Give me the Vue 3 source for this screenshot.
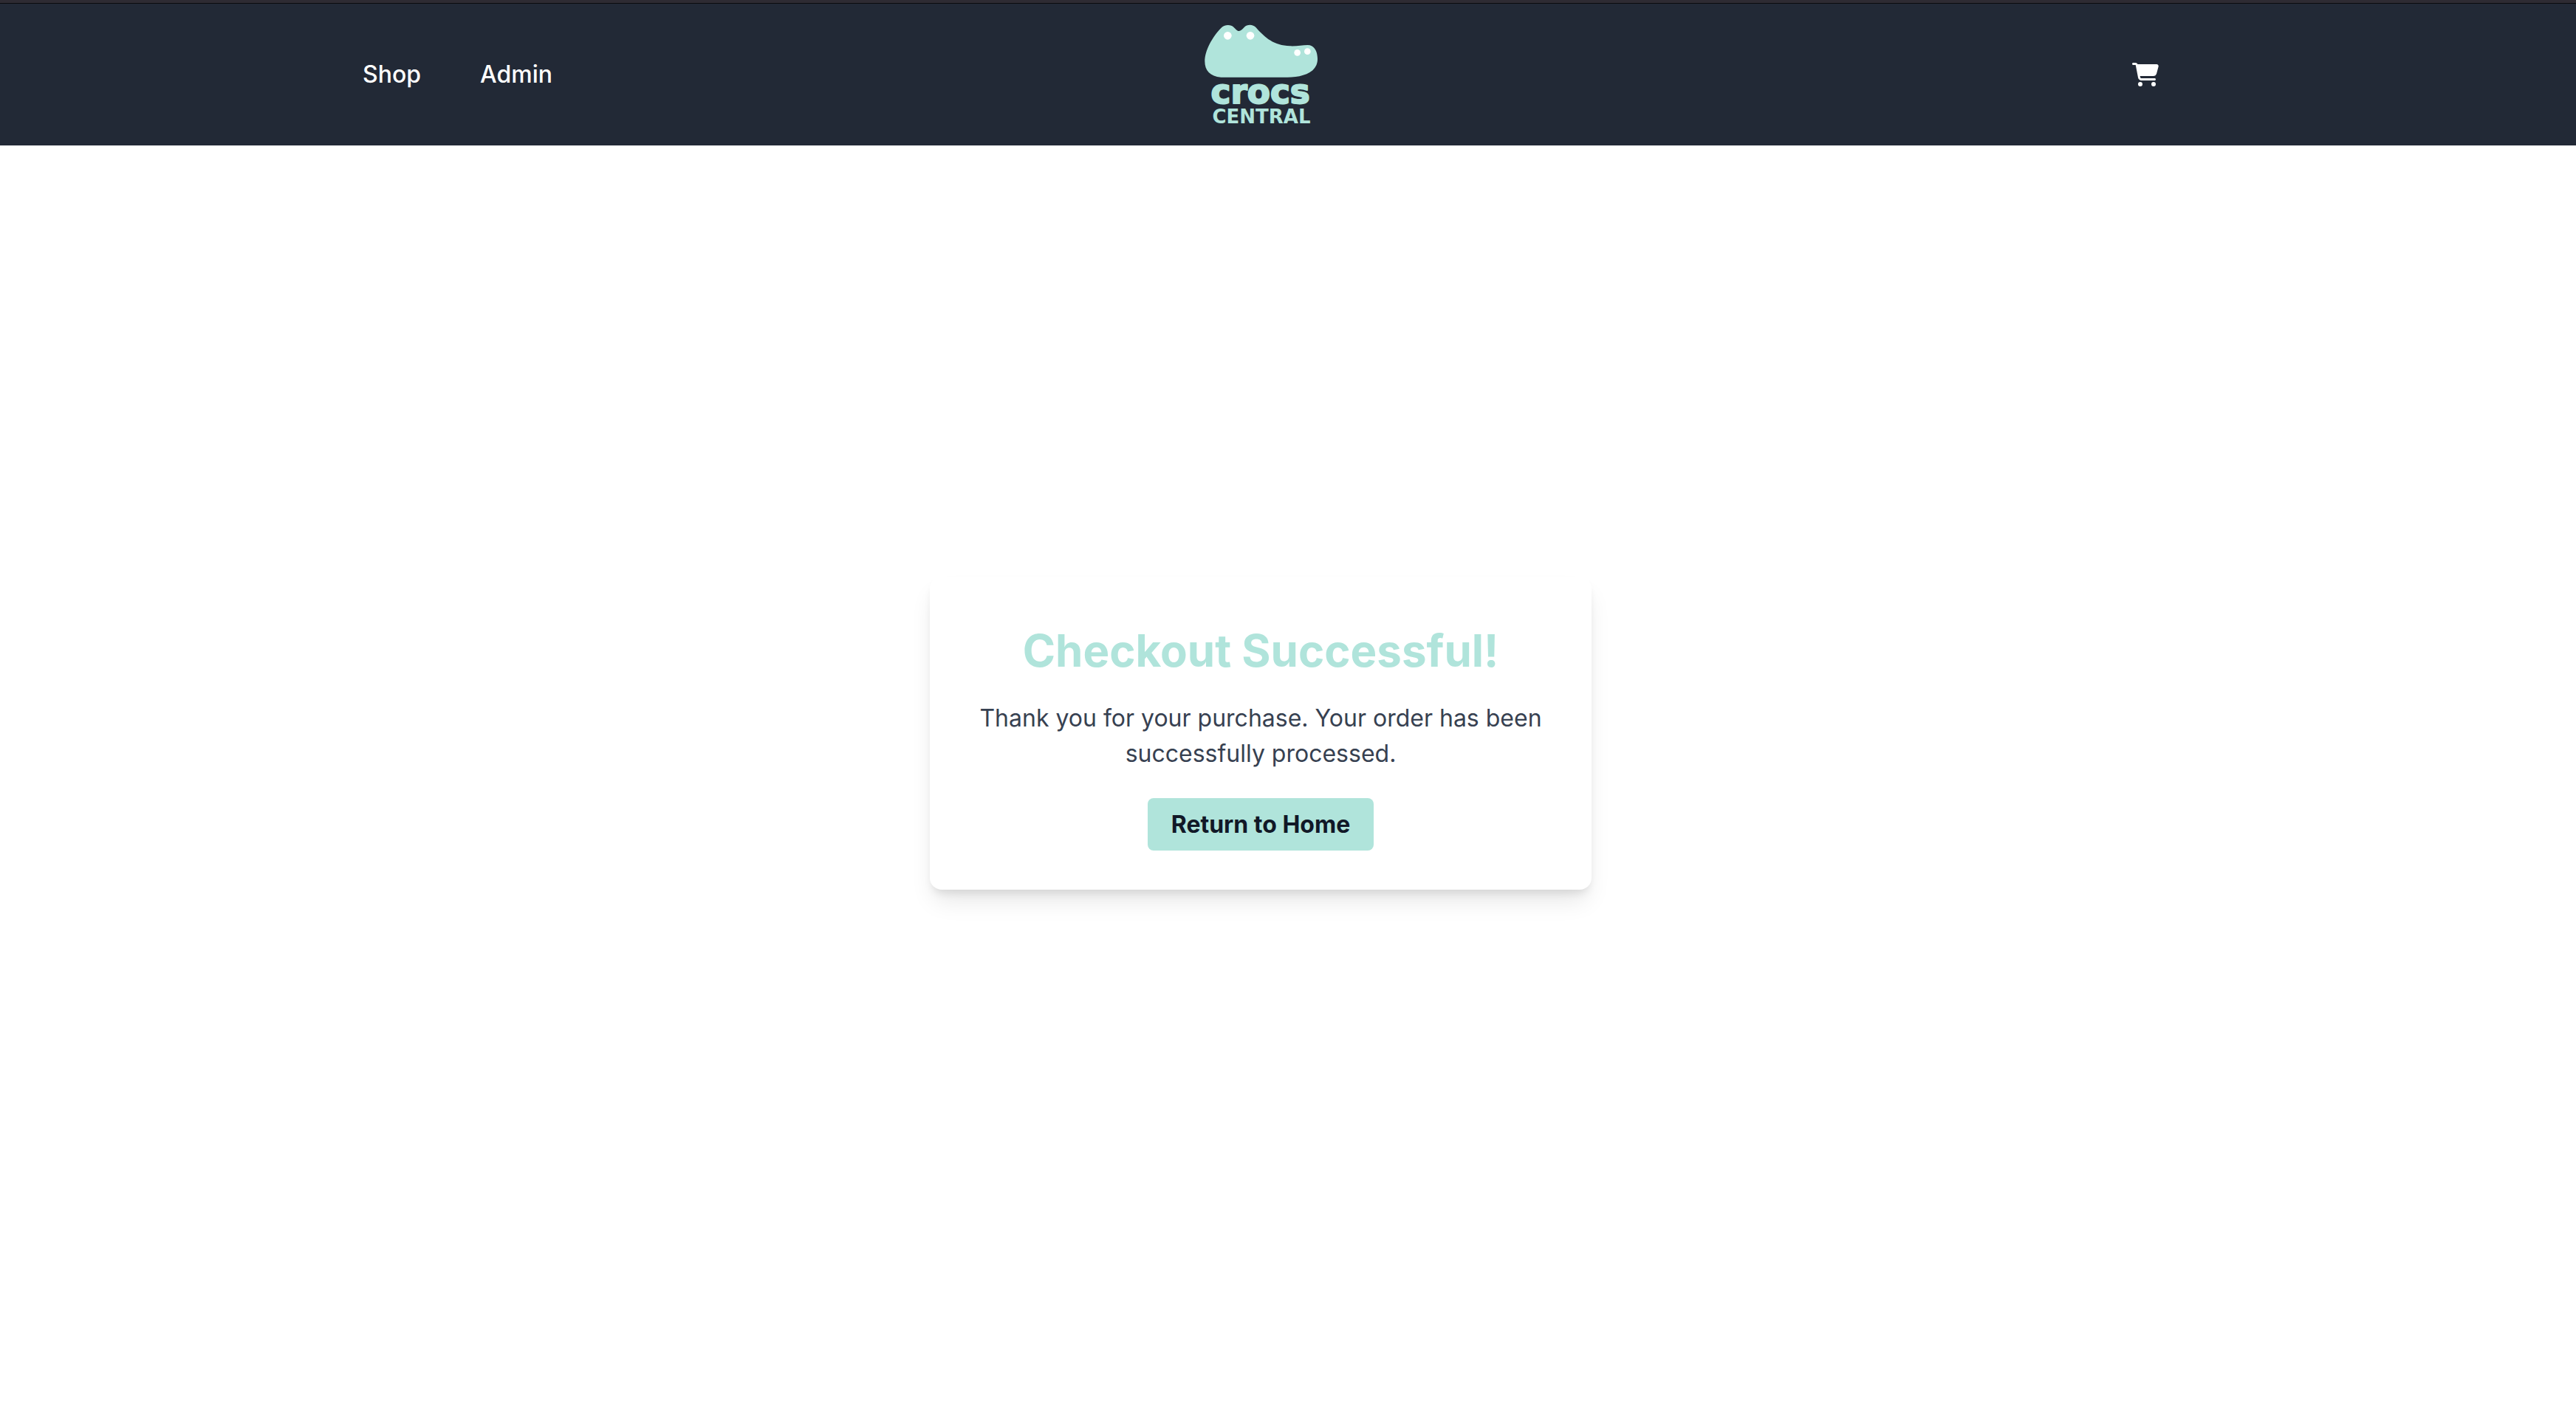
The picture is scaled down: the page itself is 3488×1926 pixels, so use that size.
<script setup>
const links = [
  { label: 'Shop', href: '#shop' },
  { label: 'Admin', href: '#admin' },
]
</script>

<template>
  <div class="page">
    <header class="navbar">
      <div class="navbar-inner">
        <nav class="links" aria-label="Main">
          <a v-for="link in links" :key="link.label" :href="link.href">{{ link.label }}</a>
        </nav>
        <a class="logo" href="#home" aria-label="Crocs Central">
          <svg viewBox="81 63 480 480" width="160" height="160" aria-hidden="true">
            <path
              class="mint"
              d="M94 250C94 205 125 150 160 114C172 99 200 98 211 110C222 120 226 126 233 126C240 126 246 119 254 111C266 98 290 98 302 112C340 155 375 185 440 187C470 188 490 183 512 183C540 183 552 212 552 240C552 295 490 314 430 314H160C115 312 94 285 94 250Z"
            />
            <g fill="#fff">
              <circle cx="187" cy="145" r="16" />
              <circle cx="279" cy="145" r="16" />
              <circle cx="470" cy="214" r="13" />
              <circle cx="511" cy="209" r="13" />
            </g>
            <text class="mint crocs" x="320" y="419">crocs</text>
            <text class="mint central" x="324" y="500">CENTRAL</text>
          </svg>
        </a>
        <a class="cart" href="#cart" aria-label="Cart">
          <svg viewBox="0 0 576 512" width="36" height="32" aria-hidden="true">
            <path
              fill="#fff"
              d="M0 24C0 10.7 10.7 0 24 0H69.5c22 0 41.5 12.8 50.6 32h411c26.3 0 45.5 25 38.6 50.4l-41 152.3c-8.5 31.4-37 53.3-69.5 53.3H170.7l5.4 28.5c2.2 11.3 12.1 19.5 23.6 19.5H488c13.3 0 24 10.7 24 24s-10.7 24-24 24H199.7c-34.6 0-64.3-24.6-70.7-58.5L77.4 54.5c-.7-3.8-4-6.5-7.9-6.5H24C10.7 48 0 37.3 0 24zM128 464a48 48 0 1 1 96 0 48 48 0 1 1-96 0zm336-48a48 48 0 1 1 0 96 48 48 0 1 1 0-96z"
            />
          </svg>
        </a>
      </div>
    </header>
    <main>
      <section class="card">
        <h1>Checkout Successful!</h1>
        <p>Thank you for your purchase. Your order has been successfully processed.</p>
        <a class="button" href="#home">Return to Home</a>
      </section>
    </main>
  </div>
</template>

<style>
body {
  margin: 0;
  background: #fff;
}
</style>

<style scoped>
.page {
  box-sizing: border-box;
  display: flex;
  flex-direction: column;
  min-height: 100vh;
  border-top: 4px solid #2e2b33;
  font-family: Inter, sans-serif;
  font-size: 32px;
  line-height: 48px;
}

.navbar {
  padding-right: 74px;
  border-top: 1px solid #0b0b0d;
  background: #222936;
}

.navbar-inner {
  box-sizing: border-box;
  display: grid;
  grid-template-columns: 1fr auto 1fr;
  align-items: center;
  max-width: 2560px;
  min-height: 192px;
  margin: 0 auto;
  padding: 0 64px;
}

.links {
  display: flex;
  gap: 80px;
}

.links a {
  color: #fff;
  font-weight: 500;
  text-decoration: none;
}

.logo,
.cart {
  display: flex;
}

.cart {
  justify-self: end;
}

.mint {
  fill: #b0e4db;
}

.crocs,
.central {
  font-family: "DejaVu Sans", sans-serif;
  font-weight: 700;
  text-anchor: middle;
}

.crocs {
  font-size: 136px;
  stroke: #b0e4db;
  stroke-width: 6px;
  stroke-linejoin: round;
}

.central {
  font-size: 78px;
}

main {
  display: flex;
  flex: 1;
  align-items: center;
  justify-content: center;
  padding: 0 74px 138px 0;
}

.card {
  box-sizing: border-box;
  width: 100%;
  max-width: 896px;
  padding: 64px;
  border-radius: 16px;
  background: #fff;
  box-shadow: 0 20px 32px -6px rgba(0, 0, 0, 0.1), 0 8px 12px -4px rgba(0, 0, 0, 0.1);
  text-align: center;
}

h1 {
  margin: 0 0 32px;
  color: #b0e4db;
  font-size: 60px;
  font-weight: 700;
  line-height: 72px;
}

p {
  margin: 0 0 48px;
  color: #374151;
}

.button {
  padding: 16px 32px;
  border-radius: 8px;
  background: #b0e4db;
  color: #111827;
  font-weight: 700;
  text-decoration: none;
}
</style>
